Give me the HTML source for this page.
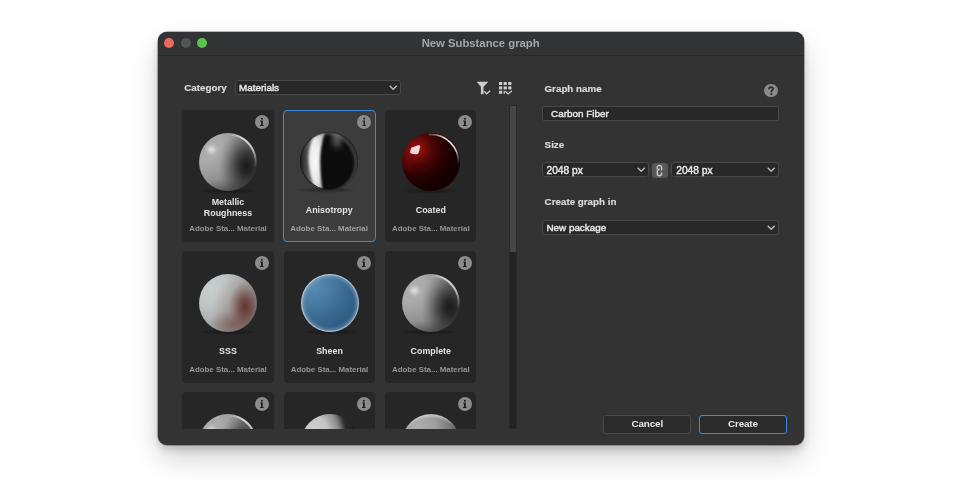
<!DOCTYPE html>
<html><head><meta charset="utf-8">
<style>
*{box-sizing:border-box;margin:0;padding:0}
html,body{width:960px;height:480px;overflow:hidden;background:#fff;font-family:"Liberation Sans",sans-serif;position:relative}
#root{position:absolute;left:0;top:0;width:960px;height:480px;will-change:transform}
div,span{position:absolute}
#win{left:157.5px;top:31.7px;width:646.3px;height:413.6px;border-radius:9px;background:#333333;box-shadow:0 0 0 0.5px rgba(0,0,0,0.5),0 5px 9px rgba(0,0,0,0.16),0 14px 30px -2px rgba(0,0,0,0.2),0 0 5px rgba(0,0,0,0.06)}
#tb{left:157.5px;top:31.7px;width:646.3px;height:24.2px;background:#323335;border-bottom:1px solid #282928;border-radius:9px 9px 0 0}
.tl{top:38px;width:10.2px;height:10.2px;border-radius:50%}
#title{left:157.5px;top:30.6px;width:646.3px;height:24px;line-height:24px;text-align:center;color:#a6a6a7;font-weight:bold;font-size:11.3px;white-space:nowrap}
.lbl{color:#d9d9d9;font-weight:bold;font-size:9.8px;white-space:nowrap;line-height:12px;-webkit-text-stroke:0.2px #d9d9d9}
.dd{background:#282828;border:1px solid #484848;border-radius:3px;color:#e6e6e6;font-size:9.9px;white-space:nowrap;-webkit-text-stroke:0.45px #e6e6e6}
.dd span{left:3px;top:0;line-height:13px}
.chev{position:absolute;right:2.6px;top:4.1px;width:8.4px;height:5.2px}
#list{left:182px;top:105px;width:320px;height:324px;overflow:hidden}
.card{width:91.6px;height:131.5px;background:#262626;border-radius:4px}
.card.sel{background:#3c3c3c;border:1.75px solid #3a8ad6}
.sph{left:17px;top:22.5px;width:58px;height:58px;border-radius:50%}
.cname{left:0;width:92px;text-align:center;color:#e2e2e2;font-weight:bold;font-size:8.9px;line-height:11.5px;white-space:nowrap}
.csub{left:0;top:114.2px;width:92px;text-align:center;color:#949494;font-weight:bold;font-size:7.9px;white-space:nowrap;line-height:10px}
.info{left:73px;top:4.8px;width:14px;height:14px;border-radius:50%;background:#8b8b8b}
.info svg{position:absolute;left:0;top:0;width:14px;height:14px}
.btn{top:415px;height:19px;border-radius:3px;background:#2b2b2b;border:1px solid #4a4a4a;color:#e6e6e6;font-weight:bold;font-size:9.9px;letter-spacing:-0.15px;text-align:center;line-height:16.6px;white-space:nowrap}
#sb{left:509px;top:105px;width:8px;height:324px;background:#232323;border:1px solid #2b2b2b}
#thumb{left:510px;top:106px;width:6px;height:146px;background:#464646}

.shd{position:absolute;left:16px;width:60px;height:6px;border-radius:50%;background:radial-gradient(ellipse at 50% 50%,rgba(0,0,0,.35) 0,rgba(0,0,0,.15) 50%,rgba(0,0,0,0) 72%)}
#s1,#s6,#s7{background:
 radial-gradient(ellipse 28px 38px at 47.5px 33px,rgba(18,18,18,.92) 0,rgba(20,20,20,.82) 20%,rgba(24,24,24,.6) 42%,rgba(28,28,28,.32) 65%,rgba(30,30,30,.1) 85%,rgba(30,30,30,0) 100%),
 radial-gradient(ellipse 40px 16px at 30px 62px,rgba(30,30,30,.5) 0,rgba(30,30,30,0) 100%),
 radial-gradient(circle 72px at 6px 12px,#a8a8a8 0,#acacac 20%,#9c9c9c 40%,#868686 60%,#6c6c6c 80%,#5a5a5a 100%)}
#s2{background:#0c0c0c;overflow:hidden}
#s3{background:
 radial-gradient(ellipse 9px 16px at 6px 27px,rgba(130,15,15,.4) 0,rgba(130,15,15,0) 100%),
 radial-gradient(circle 62px at 15px 16px,#a01818 0,#7a0c0c 12%,#4e0404 26%,#2c0101 42%,#180000 60%,#110000 80%,#160101 100%)}
#s4{background:
 radial-gradient(ellipse 16px 24px at 46px 32px,rgba(88,36,32,.8) 0,rgba(95,45,40,.6) 35%,rgba(110,70,65,.3) 70%,rgba(120,90,85,0) 100%),
 radial-gradient(ellipse 24px 14px at 34px 50px,rgba(105,62,58,.5) 0,rgba(115,75,70,.3) 50%,rgba(120,90,85,0) 100%),
 radial-gradient(ellipse 34px 40px at 46px 38px,rgba(115,80,75,.5) 0,rgba(125,95,90,.28) 55%,rgba(140,120,115,0) 100%),
 radial-gradient(circle 66px at 12px 14px,#c8cfce 0,#c0c6c5 25%,#b0b5b4 45%,#9a9e9d 65%,#8a8282 85%,#7e7473 100%)}
#s5{background:
 radial-gradient(circle 29px at 29px 29px,rgba(180,205,225,0) 23.5px,rgba(165,192,214,.32) 27px,rgba(225,235,243,.8) 28.8px,rgba(225,235,243,.6) 29px),
 radial-gradient(circle 64px at 13px 12px,#5a8cb2 0,#497aa2 28%,#3a6a92 50%,#2e5c83 72%,#2a567b 100%)}
#s8{background:radial-gradient(ellipse 44px 70px at 12px 30px,#dadada 0,#c4c4c4 40%,#8a8a8a 62%,#2a2a2a 78%,#1e1e1e 100%)}
#s9{background:
 radial-gradient(circle 40px at 29px 40px,rgba(255,255,255,0) 35.5px,rgba(225,225,225,.6) 39px,rgba(255,255,255,0) 40px),
 radial-gradient(circle 62px at 14px 14px,#b0b0b0 0,#a0a0a0 30%,#7e7e7e 52%,#454545 75%,#2c2c2c 100%)}

</style></head><body><div id="root">
<div id="win"></div>
<div id="tb"></div>
<div class="tl" style="left:163.8px;background:#ec6a5f"></div>
<div class="tl" style="left:180.7px;background:#545457"></div>
<div class="tl" style="left:197.1px;background:#5bc24e"></div>
<div id="title">New Substance graph</div>

<div class="lbl" style="left:184.2px;top:82.4px">Category</div>
<div class="dd" style="left:235px;top:80.3px;width:166px;height:14.5px"><span style="top:-0.4px">Materials</span>
<svg class="chev" viewBox="0 0 8.4 5.2"><path d="M0.7 0.8 L4.2 4.3 L7.7 0.8" fill="none" stroke="#bcbcbc" stroke-width="1.35"/></svg></div>

<svg style="position:absolute;left:476px;top:81px" width="15" height="14" viewBox="0 0 15 14">
<path d="M0.7 0.8 H12.3 L7.5 5.8 V13.2 H4.9 V5.8 Z" fill="#cdcdcd"/>
<path d="M8.2 10.3 L10.6 12.8 L14.2 9.7" fill="none" stroke="#cdcdcd" stroke-width="1.3"/>
</svg>
<svg style="position:absolute;left:498px;top:81px" width="15" height="14" viewBox="0 0 15 14">
<g fill="#cdcdcd">
<rect x="1" y="1" width="3.2" height="3"/><rect x="5.6" y="1" width="3.2" height="3"/><rect x="10.2" y="1" width="3.2" height="3"/>
<rect x="1" y="5.4" width="3.2" height="3"/><rect x="5.6" y="5.4" width="3.2" height="3"/><rect x="10.2" y="5.4" width="3.2" height="3"/>
<rect x="1" y="9.8" width="3.2" height="3"/><rect x="5.6" y="9.8" width="1.2" height="3"/>
</g>
<path d="M7.2 10.3 L10.2 12.9 L13.9 9.8" fill="none" stroke="#cdcdcd" stroke-width="1.3"/>
</svg>

<div id="list">
  <div class="card" style="left:0;top:5px">
    <div class="info"><svg viewBox="0 0 14 14"><circle cx="6.9" cy="3.7" r="1.0" fill="#1e1e1e"/><path d="M5.2 5.5 H7.8 V9.9 H8.6 V11.1 H5.0 V9.9 H6.0 V6.6 H5.2 Z" fill="#1e1e1e"/></svg></div>
    <div class="shd" style="top:77.5px"></div><div class="sph" id="s1"><svg width="58" height="58" viewBox="0 0 58 58" style="position:absolute;left:0;top:0">
<defs><filter id="bd1" filterUnits="userSpaceOnUse" x="-30" y="-30" width="120" height="120"><feGaussianBlur stdDeviation="7"/></filter>
<filter id="bh1" x="-50%" y="-50%" width="200%" height="200%"><feGaussianBlur stdDeviation="2"/></filter>
<filter id="br1" x="-50%" y="-50%" width="200%" height="200%"><feGaussianBlur stdDeviation="0.7"/></filter>
<linearGradient id="lr1" x1="0" y1="0" x2="1" y2="1"><stop offset="0" stop-color="#fff" stop-opacity="0"/><stop offset="0.3" stop-color="#e8e8e8" stop-opacity="0.85"/><stop offset="0.65" stop-color="#e0e0e0" stop-opacity="0.8"/><stop offset="1" stop-color="#fff" stop-opacity="0"/></linearGradient>
<clipPath id="cp1"><circle cx="29" cy="29" r="29"/></clipPath></defs>
<g clip-path="url(#cp1)">
<ellipse cx="12.5" cy="16.5" rx="4" ry="3.6" fill="#fff" filter="url(#bh1)" opacity="0.75"/>
<path d="M30 1.6 A27.4 27.4 0 0 1 56.3 34" fill="none" stroke="url(#lr1)" stroke-width="2" filter="url(#br1)"/>
</g></svg></div>
    <div class="cname" style="top:86.5px">Metallic<br>Roughness</div>
    <div class="csub">Adobe Sta... Material</div>
  </div>
  <div class="card sel" style="left:100.9px;top:4.8px;width:92.7px;height:132.2px">
    <div class="info" style="left:72.8px;top:3.9px"><svg viewBox="0 0 14 14"><circle cx="7.2" cy="3.6" r="1.05" fill="#2a2a2a"/><path d="M5.5 5.4 H8.1 V9.9 H8.8 V11.1 H5.5 V9.9 H6.4 V6.6 H5.5 Z" fill="#2a2a2a"/></svg></div>
    <div class="shd" style="left:13px;top:76px"></div><div class="sph" id="s2" style="left:16px;top:21px"><svg width="58" height="58" viewBox="0 0 58 58" style="position:absolute;left:0;top:0">
<defs><filter id="b2" x="-50%" y="-50%" width="200%" height="200%"><feGaussianBlur stdDeviation="1.6"/></filter>
<filter id="b1" x="-50%" y="-50%" width="200%" height="200%"><feGaussianBlur stdDeviation="0.8"/></filter>
<filter id="b4" x="-50%" y="-50%" width="200%" height="200%"><feGaussianBlur stdDeviation="3"/></filter>
<linearGradient id="lg2" x1="0" x2="1" y1="0" y2="0"><stop offset="0" stop-color="#1a1a1a"/><stop offset="0.45" stop-color="#555"/><stop offset="1" stop-color="#8a8a8a"/></linearGradient>
<radialGradient id="rg2" cx="0.4" cy="0.5" r="0.6"><stop offset="0" stop-color="#fafafa"/><stop offset="0.6" stop-color="#e8e8e8"/><stop offset="1" stop-color="#bcbcbc"/></radialGradient>
<clipPath id="c2"><circle cx="29" cy="29" r="29"/></clipPath></defs>
<g clip-path="url(#c2)">
<path d="M0 0 H18 C12 12 10 20 10 29 C10 40 12 48 18 58 H0 Z" fill="url(#lg2)" filter="url(#b2)"/>
<path d="M15 0 C10 11 8 20 8.5 29 C9 40 11.5 50 16 58 L22.5 58 C20.8 46 20.2 37 20.2 29 C20.2 20 21.5 10 25 0 Z" fill="url(#rg2)" filter="url(#b1)"/>
<ellipse cx="37" cy="4" rx="4" ry="12" fill="#6a6a6a" filter="url(#b4)"/>
<circle cx="29" cy="29" r="29" fill="none" stroke="#1c1c1c" stroke-width="2.2"/>
<circle cx="26" cy="31" r="30" fill="none" stroke="#7a7a7a" stroke-width="2" filter="url(#b2)" opacity="0.8"/>
</g></svg></div>
    <div class="cname" style="top:93.9px;left:-0.7px">Anisotropy</div>
    <div class="csub" style="left:-0.8px;top:113.3px;color:#a0a0a0">Adobe Sta... Material</div>
  </div>
  <div class="card" style="left:202.8px;top:5px">
    <div class="info"><svg viewBox="0 0 14 14"><circle cx="6.9" cy="3.7" r="1.0" fill="#1e1e1e"/><path d="M5.2 5.5 H7.8 V9.9 H8.6 V11.1 H5.0 V9.9 H6.0 V6.6 H5.2 Z" fill="#1e1e1e"/></svg></div>
    <div class="shd" style="top:77.5px"></div><div class="sph" id="s3"><svg width="58" height="58" viewBox="0 0 58 58" style="position:absolute;left:0;top:0">
<defs><filter id="b3" x="-50%" y="-50%" width="200%" height="200%"><feGaussianBlur stdDeviation="0.55"/></filter>
<linearGradient id="lg3" x1="0" y1="0" x2="1" y2="1"><stop offset="0" stop-color="#fff" stop-opacity="0.2"/><stop offset="0.35" stop-color="#fff" stop-opacity="0.95"/><stop offset="0.7" stop-color="#fff" stop-opacity="0.8"/><stop offset="1" stop-color="#fff" stop-opacity="0"/></linearGradient></defs>
<path d="M26.6 1.6 A27.5 27.5 0 0 1 56.4 31.4" fill="none" stroke="url(#lg3)" stroke-width="1.7" filter="url(#b3)"/>
<path d="M9.2 14.8 L16.2 12.3 Q18.6 11.8 18.2 14 L16.6 19.8 Q16 21.4 14 21.3 L9.6 20.8 Q7.9 20.4 8.1 18.8 Z" fill="#ffeaea" opacity="0.92" filter="url(#b3)"/>
</svg></div>
    <div class="cname" style="top:94.6px">Coated</div>
    <div class="csub">Adobe Sta... Material</div>
  </div>
  <div class="card" style="left:0;top:146px">
    <div class="info"><svg viewBox="0 0 14 14"><circle cx="6.9" cy="3.7" r="1.0" fill="#1e1e1e"/><path d="M5.2 5.5 H7.8 V9.9 H8.6 V11.1 H5.0 V9.9 H6.0 V6.6 H5.2 Z" fill="#1e1e1e"/></svg></div>
    <div class="shd" style="top:77.5px"></div><div class="sph" id="s4"></div>
    <div class="cname" style="top:94.6px">SSS</div>
    <div class="csub">Adobe Sta... Material</div>
  </div>
  <div class="card" style="left:101.5px;top:146px">
    <div class="info"><svg viewBox="0 0 14 14"><circle cx="6.9" cy="3.7" r="1.0" fill="#1e1e1e"/><path d="M5.2 5.5 H7.8 V9.9 H8.6 V11.1 H5.0 V9.9 H6.0 V6.6 H5.2 Z" fill="#1e1e1e"/></svg></div>
    <div class="shd" style="top:77.5px"></div><div class="sph" id="s5"></div>
    <div class="cname" style="top:94.6px">Sheen</div>
    <div class="csub">Adobe Sta... Material</div>
  </div>
  <div class="card" style="left:202.8px;top:146px">
    <div class="info"><svg viewBox="0 0 14 14"><circle cx="6.9" cy="3.7" r="1.0" fill="#1e1e1e"/><path d="M5.2 5.5 H7.8 V9.9 H8.6 V11.1 H5.0 V9.9 H6.0 V6.6 H5.2 Z" fill="#1e1e1e"/></svg></div>
    <div class="shd" style="top:77.5px"></div><div class="sph" id="s6"><svg width="58" height="58" viewBox="0 0 58 58" style="position:absolute;left:0;top:0">
<defs><filter id="bd6" filterUnits="userSpaceOnUse" x="-30" y="-30" width="120" height="120"><feGaussianBlur stdDeviation="7"/></filter>
<filter id="bh6" x="-50%" y="-50%" width="200%" height="200%"><feGaussianBlur stdDeviation="2"/></filter>
<filter id="br6" x="-50%" y="-50%" width="200%" height="200%"><feGaussianBlur stdDeviation="0.7"/></filter>
<linearGradient id="lr6" x1="0" y1="0" x2="1" y2="1"><stop offset="0" stop-color="#fff" stop-opacity="0"/><stop offset="0.3" stop-color="#e8e8e8" stop-opacity="0.85"/><stop offset="0.65" stop-color="#e0e0e0" stop-opacity="0.8"/><stop offset="1" stop-color="#fff" stop-opacity="0"/></linearGradient>
<clipPath id="cp6"><circle cx="29" cy="29" r="29"/></clipPath></defs>
<g clip-path="url(#cp6)">
<ellipse cx="12.5" cy="16.5" rx="4" ry="3.6" fill="#fff" filter="url(#bh6)" opacity="0.75"/>
<path d="M30 1.6 A27.4 27.4 0 0 1 56.3 34" fill="none" stroke="url(#lr6)" stroke-width="2" filter="url(#br6)"/>
</g></svg></div>
    <div class="cname" style="top:94.6px">Complete</div>
    <div class="csub">Adobe Sta... Material</div>
  </div>
  <div class="card" style="left:0;top:286.75px">
    <div class="info"><svg viewBox="0 0 14 14"><circle cx="6.9" cy="3.7" r="1.0" fill="#1e1e1e"/><path d="M5.2 5.5 H7.8 V9.9 H8.6 V11.1 H5.0 V9.9 H6.0 V6.6 H5.2 Z" fill="#1e1e1e"/></svg></div>
    <div class="shd" style="top:77.5px"></div><div class="sph" id="s7"><svg width="58" height="58" viewBox="0 0 58 58" style="position:absolute;left:0;top:0">
<defs><filter id="bd7" filterUnits="userSpaceOnUse" x="-30" y="-30" width="120" height="120"><feGaussianBlur stdDeviation="7"/></filter>
<filter id="bh7" x="-50%" y="-50%" width="200%" height="200%"><feGaussianBlur stdDeviation="2"/></filter>
<filter id="br7" x="-50%" y="-50%" width="200%" height="200%"><feGaussianBlur stdDeviation="0.7"/></filter>
<linearGradient id="lr7" x1="0" y1="0" x2="1" y2="1"><stop offset="0" stop-color="#fff" stop-opacity="0"/><stop offset="0.3" stop-color="#e8e8e8" stop-opacity="0.85"/><stop offset="0.65" stop-color="#e0e0e0" stop-opacity="0.8"/><stop offset="1" stop-color="#fff" stop-opacity="0"/></linearGradient>
<clipPath id="cp7"><circle cx="29" cy="29" r="29"/></clipPath></defs>
<g clip-path="url(#cp7)">
<ellipse cx="12.5" cy="16.5" rx="4" ry="3.6" fill="#fff" filter="url(#bh7)" opacity="0.75"/>
<path d="M30 1.6 A27.4 27.4 0 0 1 56.3 34" fill="none" stroke="url(#lr7)" stroke-width="2" filter="url(#br7)"/>
</g></svg></div>
  </div>
  <div class="card" style="left:101.5px;top:286.75px">
    <div class="info"><svg viewBox="0 0 14 14"><circle cx="6.9" cy="3.7" r="1.0" fill="#1e1e1e"/><path d="M5.2 5.5 H7.8 V9.9 H8.6 V11.1 H5.0 V9.9 H6.0 V6.6 H5.2 Z" fill="#1e1e1e"/></svg></div>
    <div class="shd" style="top:77.5px"></div><div class="sph" id="s8"></div>
  </div>
  <div class="card" style="left:202.8px;top:286.75px">
    <div class="info"><svg viewBox="0 0 14 14"><circle cx="6.9" cy="3.7" r="1.0" fill="#1e1e1e"/><path d="M5.2 5.5 H7.8 V9.9 H8.6 V11.1 H5.0 V9.9 H6.0 V6.6 H5.2 Z" fill="#1e1e1e"/></svg></div>
    <div class="shd" style="top:77.5px"></div><div class="sph" id="s9"></div>
  </div>
</div>
<div id="sb"></div>
<div id="thumb"></div>

<div class="lbl" style="left:544.5px;top:82.8px">Graph name</div>
<div style="left:764.2px;top:83.6px;width:13.9px;height:13.9px;border-radius:50%;background:#8b8b8b"><svg style="position:absolute;left:0;top:0" width="14" height="14" viewBox="0 0 14 14"><path d="M5.0 5.3 C5.0 3.9 5.8 3.1 7.0 3.1 C8.2 3.1 9.0 3.9 9.0 5.0 C9.0 6.3 7.3 6.5 7.3 7.8 V8.3" fill="none" stroke="#2e2e2e" stroke-width="1.8"/><circle cx="7.3" cy="10.1" r="1.15" fill="#2e2e2e"/></svg></div>
<div class="dd" style="left:541.6px;top:106.2px;width:237px;height:14.5px;border-radius:2px"><span style="left:8.5px;top:-0.7px">Carbon Fiber</span></div>

<div class="lbl" style="left:544.6px;top:138.8px">Size</div>
<div class="dd" style="left:541.8px;top:162.2px;width:106.8px;height:15px"><span style="left:3.7px;top:0.4px;font-size:10.2px">2048 px</span>
<svg class="chev" viewBox="0 0 8.4 5.2"><path d="M0.7 0.8 L4.2 4.3 L7.7 0.8" fill="none" stroke="#bcbcbc" stroke-width="1.35"/></svg></div>
<div style="left:652.3px;top:162.6px;width:15.8px;height:15.8px;border-radius:3px;background:#575757"><svg style="position:absolute;left:0;top:0" width="16" height="16" viewBox="0 0 16 16"><path d="M5.3 6.2 C5.0 5.6 5.0 5.0 5.1 4.3 C5.4 3.0 6.3 2.3 7.4 2.3 C8.7 2.3 9.6 3.3 9.6 4.6 V7.2" fill="none" stroke="#d2d2d2" stroke-width="1.3"/><path d="M7.9 6.2 C6.3 6.2 5.3 7.3 5.3 8.8 V10.6 C5.3 12.0 6.2 12.9 7.4 12.9 C8.6 12.9 9.6 12.0 9.6 10.6 V9.6" fill="none" stroke="#d2d2d2" stroke-width="1.3"/></svg></div>
<div class="dd" style="left:671.4px;top:162.2px;width:107.2px;height:15px"><span style="left:3.9px;top:0.4px;font-size:10.2px">2048 px</span>
<svg class="chev" viewBox="0 0 8.4 5.2"><path d="M0.7 0.8 L4.2 4.3 L7.7 0.8" fill="none" stroke="#bcbcbc" stroke-width="1.35"/></svg></div>

<div class="lbl" style="left:544.6px;top:196px">Create graph in</div>
<div class="dd" style="left:541.6px;top:219.8px;width:237px;height:15px"><span style="left:3.8px;top:0px">New package</span>
<svg class="chev" viewBox="0 0 8.4 5.2"><path d="M0.7 0.8 L4.2 4.3 L7.7 0.8" fill="none" stroke="#bcbcbc" stroke-width="1.35"/></svg></div>

<div class="btn" style="left:603.3px;width:88px">Cancel</div>
<div class="btn" style="left:698.8px;width:88.2px;border:1.5px solid #2f8ef0;line-height:16px">Create</div>
</div></body></html>
